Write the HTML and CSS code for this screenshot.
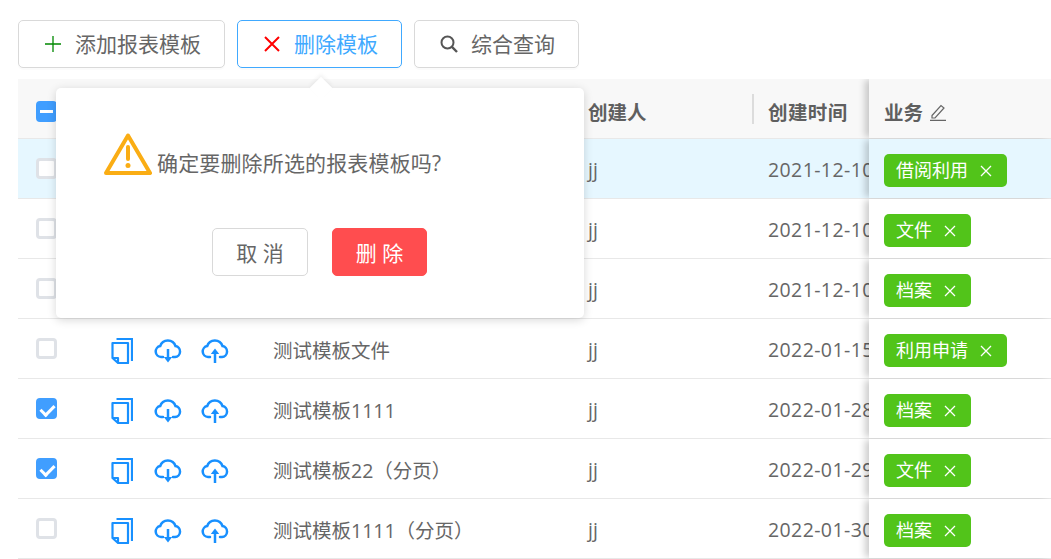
FILE: index.html
```html
<!DOCTYPE html>
<html lang="zh-CN">
  <head>
    <meta charset="UTF-8" />
    <title>报表模板</title>
    <link rel="stylesheet" href="styles.css">
  </head>
  <body>
    <svg class="defs" width="0" height="0">
      <symbol id="i-doc" viewBox="0 0 22 26"><path d="M5.500 1H21V23" fill="none" stroke="currentColor" stroke-width="2.200"/><path d="M1.500 20V5H17V25H7Z M1.500 20H7V25" fill="none" stroke="currentColor" stroke-width="2.200" stroke-linejoin="round"/></symbol>
      <symbol id="i-down" viewBox="0 0 28 24"><path d="M9 18H7A5.500 5.500 0 0 1 6.200 7.100 8 8 0 0 1 21.500 7.100 5.500 5.500 0 0 1 21 18H19" fill="none" stroke="currentColor" stroke-width="2.500" stroke-linecap="round"/><path d="M14 10V20" stroke="currentColor" stroke-width="2.500"/><path d="M9.800 18H18.200L14 23.500Z" fill="currentColor"/></symbol>
      <symbol id="i-up" viewBox="0 0 28 24"><path d="M9 18H7A5.500 5.500 0 0 1 6.200 7.100 8 8 0 0 1 21.500 7.100 5.500 5.500 0 0 1 21 18H19" fill="none" stroke="currentColor" stroke-width="2.500" stroke-linecap="round"/><path d="M14 24V13" stroke="currentColor" stroke-width="2.500"/><path d="M9.800 15H18.200L14 9.500Z" fill="currentColor"/></symbol>
      <symbol id="i-x" viewBox="0 0 12 12"><path d="M1 1L11 11M11 1L1 11" fill="none" stroke="currentColor" stroke-width="1.300"/></symbol>
    </svg>

    <div class="toolbar">
      <button class="btn">
        <svg class="btn-icon" viewBox="0 0 16 16"><path d="M8 0V16M0 8H16" stroke="#080" stroke-width="1.300"/></svg>添加报表模板
      </button>
      <button class="btn btn-active">
        <svg class="btn-icon" viewBox="0 0 16 16"><path d="M1 1L15 15M15 1L1 15" stroke="#f00" stroke-width="2"/></svg>删除模板
      </button>
      <button class="btn">
        <svg class="btn-icon btn-icon-search" viewBox="0 0 18 18"><circle cx="7.500" cy="7.500" r="6" fill="none" stroke="#555" stroke-width="2"/><path d="M11.700 11.700L17 17" stroke="#555" stroke-width="2.400"/></svg>综合查询
      </button>
    </div>

    <div class="table">
      <div class="row row-head">
        <div class="cell cell-check"><span class="check check-half"></span></div>
        <div class="cell"></div>
        <div class="cell"></div>
        <div class="cell cell-resize">创建人</div>
        <div class="cell cell-date">创建时间</div>
        <div class="cell cell-fixed">业务
          <svg class="edit-icon" viewBox="0 0 18 18"><path d="M3 12.500L12 2.500L15 5L6 15H3Z M1 17.300H17" fill="none" stroke="#666" stroke-width="1.200"/></svg>
        </div>
      </div>

      <div class="row row-current">
        <div class="cell cell-check"><span class="check"></span></div>
        <div class="cell cell-ops"></div>
        <div class="cell"></div>
        <div class="cell">jj</div>
        <div class="cell cell-date">2021-12-10</div>
        <div class="cell cell-fixed"><span class="tag">借阅利用<svg class="tag-x"><use href="#i-x"/></svg></span></div>
      </div>
      <div class="row">
        <div class="cell cell-check"><span class="check"></span></div>
        <div class="cell cell-ops"></div>
        <div class="cell"></div>
        <div class="cell">jj</div>
        <div class="cell cell-date">2021-12-10</div>
        <div class="cell cell-fixed"><span class="tag">文件<svg class="tag-x"><use href="#i-x"/></svg></span></div>
      </div>
      <div class="row">
        <div class="cell cell-check"><span class="check"></span></div>
        <div class="cell cell-ops"></div>
        <div class="cell"></div>
        <div class="cell">jj</div>
        <div class="cell cell-date">2021-12-10</div>
        <div class="cell cell-fixed"><span class="tag">档案<svg class="tag-x"><use href="#i-x"/></svg></span></div>
      </div>
      <div class="row">
        <div class="cell cell-check"><span class="check"></span></div>
        <div class="cell cell-ops"><svg class="op op-doc"><use href="#i-doc"/></svg><svg class="op"><use href="#i-down"/></svg><svg class="op"><use href="#i-up"/></svg></div>
        <div class="cell">测试模板文件</div>
        <div class="cell">jj</div>
        <div class="cell cell-date">2022-01-15</div>
        <div class="cell cell-fixed"><span class="tag">利用申请<svg class="tag-x"><use href="#i-x"/></svg></span></div>
      </div>
      <div class="row">
        <div class="cell cell-check"><span class="check check-on"></span></div>
        <div class="cell cell-ops"><svg class="op op-doc"><use href="#i-doc"/></svg><svg class="op"><use href="#i-down"/></svg><svg class="op"><use href="#i-up"/></svg></div>
        <div class="cell">测试模板1111</div>
        <div class="cell">jj</div>
        <div class="cell cell-date">2022-01-28</div>
        <div class="cell cell-fixed"><span class="tag">档案<svg class="tag-x"><use href="#i-x"/></svg></span></div>
      </div>
      <div class="row">
        <div class="cell cell-check"><span class="check check-on"></span></div>
        <div class="cell cell-ops"><svg class="op op-doc"><use href="#i-doc"/></svg><svg class="op"><use href="#i-down"/></svg><svg class="op"><use href="#i-up"/></svg></div>
        <div class="cell">测试模板22（分页）</div>
        <div class="cell">jj</div>
        <div class="cell cell-date">2022-01-29</div>
        <div class="cell cell-fixed"><span class="tag">文件<svg class="tag-x"><use href="#i-x"/></svg></span></div>
      </div>
      <div class="row">
        <div class="cell cell-check"><span class="check"></span></div>
        <div class="cell cell-ops"><svg class="op op-doc"><use href="#i-doc"/></svg><svg class="op"><use href="#i-down"/></svg><svg class="op"><use href="#i-up"/></svg></div>
        <div class="cell">测试模板1111（分页）</div>
        <div class="cell">jj</div>
        <div class="cell cell-date">2022-01-30</div>
        <div class="cell cell-fixed"><span class="tag">档案<svg class="tag-x"><use href="#i-x"/></svg></span></div>
      </div>
    </div>

    <!-- confirm popover for the delete button -->
    <div class="popover">
      <div class="popover-msg">
        <svg class="warn-icon" viewBox="0 0 48 42"><path d="M24 2.500L46 40H2Z" fill="none" stroke="#faad14" stroke-width="4" stroke-linejoin="round"/><path d="M24 14V26" stroke="#faad14" stroke-width="4" stroke-linecap="round"/><circle cx="24" cy="32.500" r="2.500" fill="#faad14"/></svg>
        <span>确定要删除所选的报表模板吗?</span>
      </div>
      <div class="popover-actions">
        <button class="pop-btn">取 消</button>
        <button class="pop-btn pop-btn-danger">删 除</button>
      </div>
    </div>
  </body>
</html>
```

FILE: styles.css
```css
*{box-sizing:border-box}
html,body{height:100%}
body{margin:0;position:relative;overflow:hidden;background:#fff;color:#666;font-family:"Open Sans","Noto Sans CJK SC",sans-serif;font-size:19.5px}
.defs{display:block;height:0}
button{font-family:inherit;cursor:pointer}

.toolbar{display:flex;gap:12px;padding:20px 0 11px 18px}
.btn{display:flex;align-items:center;height:48px;padding:0 23px 3px 26px;background:#fff;border:1px solid #d9d9d9;border-radius:5px;color:#666;font-size:21px;box-shadow:0 2px 0 rgba(0,0,0,.015)}
.btn-active{border-color:#40a9ff;color:#40a9ff}
.btn-icon{width:16px;height:16px;margin:3px 14px 0 0;flex:none}
.btn-icon-search{width:18px;height:18px;margin-left:-1px;margin-right:13px}

.table{margin-left:18px;overflow:hidden}
.row{display:grid;grid-template-columns:92px 163px 315px 180px 101px 182px;height:60px;border-bottom:1px solid #e8e8e8}
.row-head{background:#f8f8f8;font-weight:700;color:#5f5f5f}
.row-current{background:#e6f7ff}
.cell{display:flex;align-items:center;min-width:0;padding-top:1px;white-space:nowrap}
.row-head .cell{padding-top:6px}
.cell-check{padding-top:0;padding-left:18px}
.cell-ops{padding-top:4px}
.cell-date{overflow:hidden;letter-spacing:.4px}
.cell-resize{position:relative}
.cell-resize::before{content:"";position:absolute;right:14px;top:15px;width:2px;height:30px;background:#dcdcdc}
.cell-fixed{position:relative;padding-top:4px;padding-left:15px;box-shadow:-5px 0 7px -1px rgba(0,0,0,.2);clip-path:inset(0 0 -1px -14px)}
.row .cell-fixed{background-color:#fff}
.row-head .cell-fixed{background-color:#f8f8f8}
.row-current .cell-fixed{background-color:#e6f7ff}

.check{display:block;width:21px;height:21px;border:3px solid #dfe2e7;border-radius:4px;background:#fff;position:relative}
.check-on,.check-half{background:#409eff;border-color:#409eff}
.check-on::after{content:"";position:absolute;left:4px;top:1px;width:6px;height:11px;border:solid #fff;border-width:0 3px 3px 0;transform:rotate(45deg)}
.check-half::after{content:"";position:absolute;left:1px;right:1px;top:6px;height:3px;background:#fff}

.cell-ops{color:#1890ff;gap:19px}
.op{display:block;width:28px;height:24px}
.op-doc{width:22px;height:26px;margin-left:1px;margin-right:2px}

.tag{display:inline-flex;align-items:center;height:33px;padding:0 15px 3px 12px;border-radius:5px;background:#52c41a;color:#fff;font-size:18px}
.tag-x{width:12px;height:12px;margin-left:12px;margin-top:3px;flex:none}
.edit-icon{width:18px;height:18px;margin-left:6px}

.popover{position:absolute;left:56px;top:88px;width:528px;height:230px;background:#fff;border-radius:5px;box-shadow:0 2px 10px rgba(0,0,0,.16)}
.popover::before{content:"";position:absolute;left:257px;top:-8px;width:16px;height:16px;background:#fff;transform:rotate(45deg);box-shadow:-2px -2px 4px rgba(0,0,0,.05)}
.popover-msg{position:relative;display:flex;align-items:flex-end;gap:5px;padding:45px 0 0 48px;font-size:21px;line-height:20px}
.popover-msg span{margin-bottom:2px;letter-spacing:.15px}
.warn-icon{width:48px;height:42px;flex:none}
.popover-actions{display:flex;justify-content:center;gap:24px;margin-top:53px;padding-right:1px}
.pop-btn{width:96px;height:48px;background:#fff;border:1px solid #d9d9d9;border-radius:5px;color:#666;font-size:21px}
.pop-btn-danger{width:95px;background:#ff4d4f;border-color:#ff4d4f;color:#fff}
```
